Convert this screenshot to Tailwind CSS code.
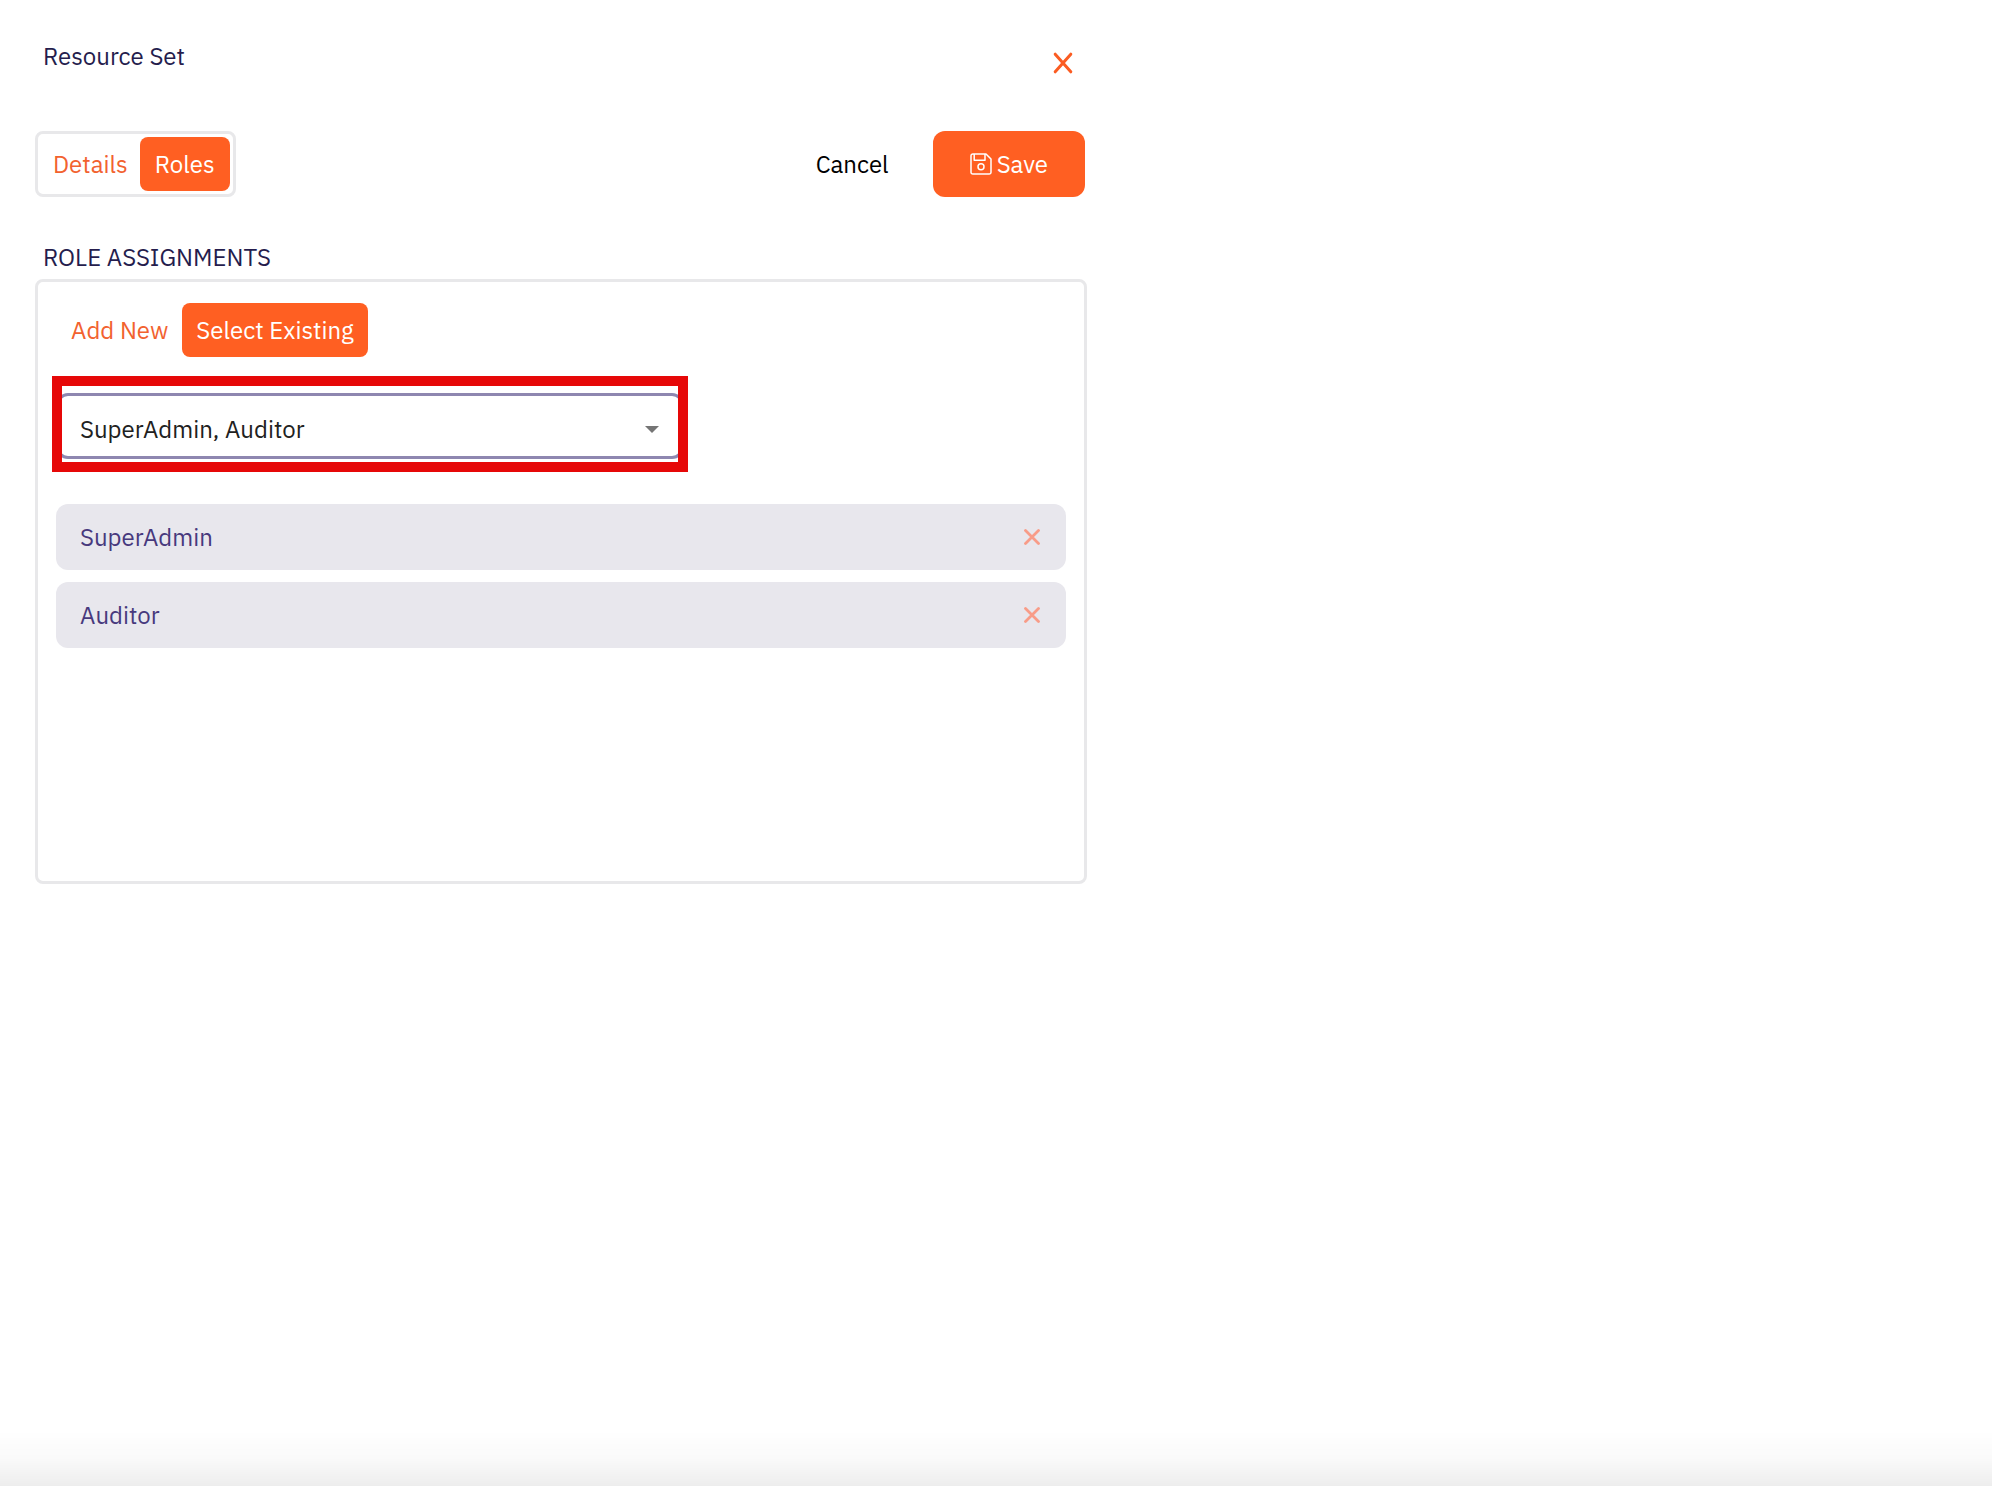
<!DOCTYPE html>
<html lang="en">
<head>
    <meta charset="UTF-8">
    <meta name="viewport" content="width=device-width, initial-scale=1.0">
    <title>Resource Set</title>
    <script src="https://cdn.jsdelivr.net/npm/@tailwindcss/browser@4"></script>
</head>
<body class="min-h-screen bg-white font-['IBM_Plex_Sans',Roboto,sans-serif] text-2xl leading-9 text-[#251d4d]">
    <main class="w-full max-w-[1087px] pl-[35px] pt-[38px] pb-16">
        <header class="flex items-start justify-between pl-2">
            <h1>Resource Set</h1>
            <button type="button" aria-label="Close" class="flex h-[50px] w-12 items-center justify-center text-[#fb5c22]">
                <svg class="h-[22px] w-5" viewBox="0 0 20 22" fill="none" stroke="currentColor" stroke-width="3" stroke-linecap="round">
                    <path d="M2.2 2.2L17.8 19.8M17.8 2.2L2.2 19.8" />
                </svg>
            </button>
        </header>

        <div class="mt-[43px] flex items-center justify-between">
            <div class="flex rounded-lg border-3 border-[#e8e8ea] p-[3px]">
                <button type="button" class="rounded-lg px-3 py-[9px] text-[#f2622f]">Details</button>
                <button type="button" class="rounded-lg bg-[#ff5f22] px-[15px] py-[9px] text-white">Roles</button>
            </div>
            <div class="flex items-center pr-0.5">
                <button type="button" class="px-11 py-[15px] text-black">Cancel</button>
                <button type="button" class="flex items-center gap-[5px] rounded-xl bg-[#ff5f22] px-[37px] py-[15px] text-white">
                    <svg class="size-[22px]" viewBox="0 0 22 22" fill="none" stroke="currentColor" stroke-width="1.5" stroke-linejoin="round">
                        <path d="M2.8 1H16L21 6V19.2A1.8 1.8 0 0 1 19.2 21H2.8A1.8 1.8 0 0 1 1 19.2V2.8A1.8 1.8 0 0 1 2.8 1Z" />
                        <path d="M4.2 1V7.2H15V1" />
                        <circle cx="11" cy="13.8" r="3" />
                    </svg>
                    Save
                </button>
            </div>
        </div>

        <h2 class="mt-[42px] mb-1 pl-2">ROLE ASSIGNMENTS</h2>
        <section class="min-h-[605px] rounded-lg border-3 border-[#e8e8ea] px-[18px] pt-[21px] pb-5">
            <div class="flex pl-px">
                <button type="button" class="rounded-lg px-[14px] py-[9px] text-[#f2622f]">Add New</button>
                <button type="button" class="rounded-lg bg-[#ff5f22] px-[14px] py-[9px] text-white">Select Existing</button>
            </div>

            <div class="relative mt-9 w-full max-w-[628px]">
                <select aria-label="Roles" class="block h-[66px] w-full appearance-none rounded-xl border-3 border-[#8e87b0] bg-white pt-1.5 pl-[21px] pr-12 text-[#212121] outline-none">
                    <option>SuperAdmin, Auditor</option>
                </select>
                <svg class="pointer-events-none absolute top-[33px] right-[25px] h-[7px] w-[14px]" viewBox="0 0 14 7" fill="#757575">
                    <path d="M0 0H14L7 7Z" />
                </svg>
                <!-- highlight frame -->
                <div class="pointer-events-none absolute -inset-x-1 -top-[17px] -bottom-[13px] border-10 border-[#e60808]"></div>
            </div>

            <ul class="mt-[45px] flex flex-col gap-3 text-[#47397d]">
                <li class="flex items-center justify-between rounded-xl bg-[#e8e7ed] px-6 py-[15px]">
                    SuperAdmin
                    <button type="button" aria-label="Remove SuperAdmin" class="pr-0.5 text-[#f89c88]">
                        <svg class="size-4" viewBox="0 0 16 16" fill="none" stroke="currentColor" stroke-width="2.8" stroke-linecap="round">
                            <path d="M1.5 1.5L14.5 14.5M14.5 1.5L1.5 14.5" />
                        </svg>
                    </button>
                </li>
                <li class="flex items-center justify-between rounded-xl bg-[#e8e7ed] px-6 py-[15px]">
                    Auditor
                    <button type="button" aria-label="Remove Auditor" class="pr-0.5 text-[#f89c88]">
                        <svg class="size-4" viewBox="0 0 16 16" fill="none" stroke="currentColor" stroke-width="2.8" stroke-linecap="round">
                            <path d="M1.5 1.5L14.5 14.5M14.5 1.5L1.5 14.5" />
                        </svg>
                    </button>
                </li>
            </ul>
        </section>
    </main>
    <div class="pointer-events-none fixed inset-x-0 bottom-0 h-14 bg-linear-to-b from-transparent via-black/2 to-black/7"></div>
</body>
</html>
